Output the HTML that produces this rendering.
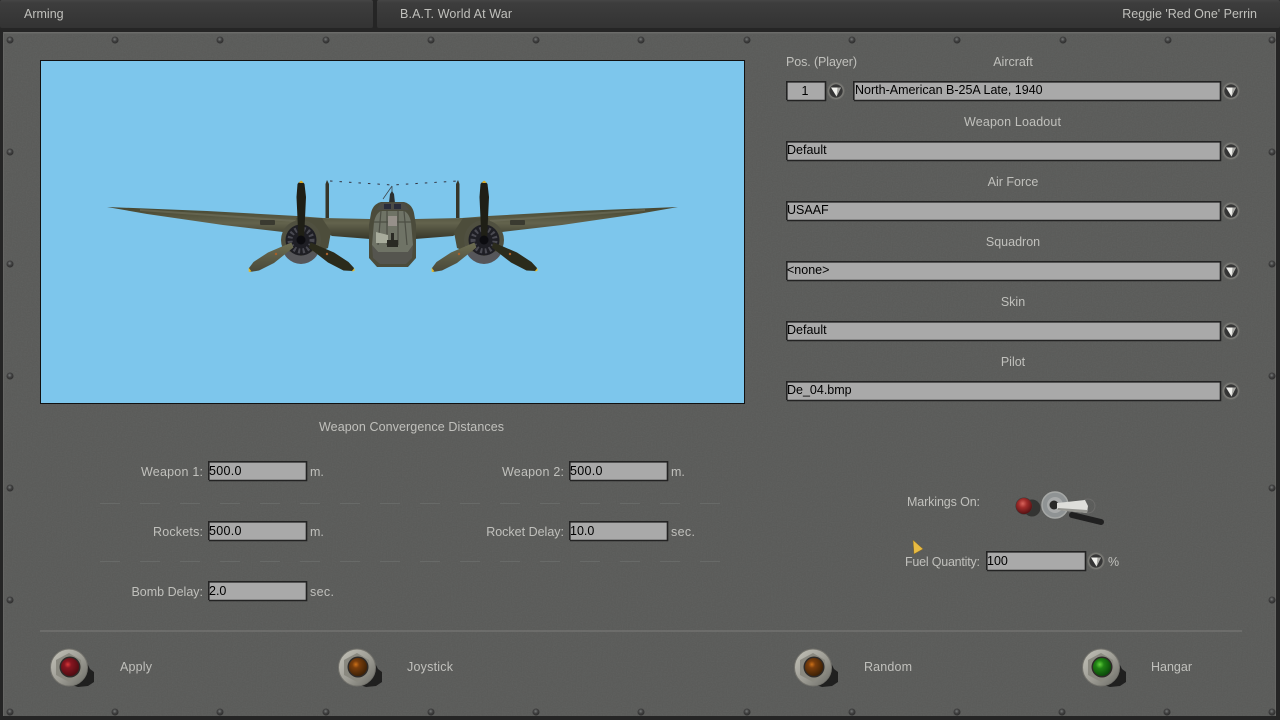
<!DOCTYPE html>
<html><head><meta charset="utf-8"><style>
html,body{margin:0;padding:0;background:#222;width:1280px;height:720px;overflow:hidden}
svg{display:block}
text{font-family:"Liberation Sans",sans-serif;font-size:12.5px;fill:#c0c0bc}
.f{fill:#000}
.m{text-anchor:middle}.e{text-anchor:end}
</style></head><body>
<svg width="1280" height="720" viewBox="0 0 1280 720" xmlns="http://www.w3.org/2000/svg">
<defs>
<filter id="noise" x="0" y="0" width="100%" height="100%"><feTurbulence type="fractalNoise" baseFrequency="0.8" numOctaves="2" seed="3"/><feColorMatrix values="0 0 0 0 0.25 0 0 0 0 0.25 0 0 0 0 0.25 0.6 0.6 0 0 -0.4"/></filter>
<linearGradient id="bar" x1="0" y1="0" x2="0" y2="1"><stop offset="0" stop-color="#454545"/><stop offset=".1" stop-color="#3d3d3d"/><stop offset="1" stop-color="#333"/></linearGradient>
<radialGradient id="riv" cx=".45" cy=".4" r=".6"><stop offset="0" stop-color="#777a7a"/><stop offset=".5" stop-color="#414141"/><stop offset="1" stop-color="#2c2c2c"/></radialGradient>
<g id="r"><circle r="3.5" fill="url(#riv)"/></g>
<radialGradient id="dd" cx=".5" cy=".5" r=".5"><stop offset="0" stop-color="#2c2c2c"/><stop offset=".72" stop-color="#383838"/><stop offset=".8" stop-color="#80807b"/><stop offset="1" stop-color="#666663"/></radialGradient>
<g id="d"><circle r="8.800" fill="url(#dd)"/><path d="M-5-3.500H5L.5 5.500Z" fill="#f0f0ec"/><path d="M1.500-3.500H5L.5 5.500Z" fill="#a8a8a4"/></g>
<linearGradient id="ring" x1="0" y1="0" x2="1" y2="1"><stop offset="0" stop-color="#c4c3ba"/><stop offset=".55" stop-color="#9c9b93"/><stop offset="1" stop-color="#6a6a64"/></linearGradient>
<g id="bt"><path d="M10-8 17-4 20 2 24 5 24 15 18 19 8 20 2 18Z" fill="#1c1c1c" opacity=".95"/><circle cx="-1" cy=".5" r="18.500" fill="url(#ring)"/><circle cx="-1" cy=".5" r="18.500" fill="none" stroke="#73726c"/><path d="M-1-14 11-7 12 7-1 15-14 8-14-7Z" fill="#8a8980"/><circle r="10.500" fill="#2e2a28"/></g>
<radialGradient id="lr" cx=".38" cy=".36" r=".65"><stop offset="0" stop-color="#d8383a"/><stop offset=".3" stop-color="#861620"/><stop offset="1" stop-color="#520c12"/></radialGradient>
<radialGradient id="lo" cx=".38" cy=".36" r=".65"><stop offset="0" stop-color="#cc7018"/><stop offset=".3" stop-color="#7a3e0c"/><stop offset="1" stop-color="#3f2206"/></radialGradient>
<radialGradient id="lg" cx=".38" cy=".36" r=".65"><stop offset="0" stop-color="#62d03c"/><stop offset=".35" stop-color="#1f8214"/><stop offset="1" stop-color="#0c4a0a"/></radialGradient>
<radialGradient id="lm" cx=".42" cy=".35" r=".65"><stop offset="0" stop-color="#d8645c"/><stop offset=".4" stop-color="#a02c2a"/><stop offset="1" stop-color="#561214"/></radialGradient>
<linearGradient id="wing" x1="0" y1="0" x2="0" y2="1"><stop offset="0" stop-color="#45452f"/><stop offset=".5" stop-color="#63634d"/><stop offset="1" stop-color="#37372a"/></linearGradient>
<linearGradient id="blade" x1="0" y1="0" x2="0" y2="1"><stop offset="0" stop-color="#6e6e52"/><stop offset="1" stop-color="#48483a"/></linearGradient>
<g id="half">
<path d="M107 207 207 211 297 216 323 218 370 219 370 239 332 236 320 229 283 232 223 225 147 214Z" fill="url(#wing)"/>
<path d="M140 209 295 220 295 222 140 211Z" fill="#6f6f5c" opacity=".6"/>
<rect x="260" y="220" width="15" height="5" rx="1" fill="#3a3a30"/>
<path d="M325.500 218V184L327 180 329 184V218Z" fill="#36362a"/>
<path d="M296 218 322 218 331 232 328 248 305 258Z" fill="#4d4d3b"/>
<circle cx="301" cy="240" r="20" fill="#505040"/>
<path d="M282 245A19 19 0 0 0 320 245L317 250 301 256 285 250Z" fill="#56565a"/>
<circle cx="301" cy="240" r="15.500" fill="#1e1e24"/>
<circle cx="301" cy="240" r="11" fill="none" stroke="#4a4a52" stroke-width="5" stroke-dasharray="2 2.500"/>
</g>
<g id="prop">
<path d="M291.400 242.500 268 252.500 253.500 262 249 268 250 272 259 270.500 274 263 293.400 247.500Z" fill="url(#blade)"/>
<path d="M248.500 267.500 251.500 271.500 248.800 272Z" fill="#e3bb2d"/>
<circle cx="276" cy="254" r="1.200" fill="#a8602a"/>
<path d="M310.700 242.500 334 252.500 348.500 262 354 268 353 271 343.500 270.500 328 262.500 308.700 247.500Z" fill="#2b2b1c"/>
<path d="M351.500 271.500 354.500 268 354.500 271Z" fill="#e3bb2d"/>
<circle cx="327" cy="254" r="1.200" fill="#a8602a"/>
<path d="M298.500 240 296.500 197 297.500 184 Q301 179 304.500 184 L306 197 304 240Z" fill="#1f1f16"/>
<path d="M299 183 Q301 178.500 303.500 183Z" fill="#d6a928"/>
<circle cx="301" cy="240" r="4.500" fill="#0c0c10"/>
</g>
</defs>
<rect width="1280" height="720" fill="#252525"/>
<rect x="0" y="0" width="373" height="28" rx="2" fill="url(#bar)"/>
<rect x="377" y="0" width="903" height="28" rx="2" fill="url(#bar)"/>
<rect x="3" y="32" width="1273" height="684" fill="#5a5b59"/>
<rect x="3" y="32" width="1273" height="684" filter="url(#noise)" opacity=".25"/>
<path d="M3 32.500H1276" stroke="#6c6c6a"/>
<path d="M3.500 32V716M1275.500 32V716" stroke="#666664"/>
<path d="M3 33.500H1276" stroke="#626361"/>

<use href="#r" x="10" y="40"/><use href="#r" x="115" y="40"/><use href="#r" x="220" y="40"/><use href="#r" x="326" y="40"/><use href="#r" x="431" y="40"/><use href="#r" x="536" y="40"/><use href="#r" x="641" y="40"/><use href="#r" x="747" y="40"/><use href="#r" x="852" y="40"/><use href="#r" x="957" y="40"/><use href="#r" x="1063" y="40"/><use href="#r" x="1168" y="40"/><use href="#r" x="1272" y="40"/>
<use href="#r" x="10" y="152"/><use href="#r" x="10" y="264"/><use href="#r" x="10" y="376"/><use href="#r" x="10" y="488"/><use href="#r" x="10" y="600"/><use href="#r" x="10" y="712"/>
<use href="#r" x="1272" y="152"/><use href="#r" x="1272" y="264"/><use href="#r" x="1272" y="376"/><use href="#r" x="1272" y="488"/><use href="#r" x="1272" y="600"/><use href="#r" x="1272" y="712"/>
<use href="#r" x="115" y="712"/><use href="#r" x="220" y="712"/><use href="#r" x="326" y="712"/><use href="#r" x="431" y="712"/><use href="#r" x="536" y="712"/><use href="#r" x="641" y="712"/><use href="#r" x="747" y="712"/><use href="#r" x="852" y="712"/><use href="#r" x="957" y="712"/><use href="#r" x="1062" y="712"/><use href="#r" x="1167" y="712"/>

<text x="24" y="18">Arming</text>
<text x="400" y="18" textLength="112">B.A.T. World At War</text>
<text x="1257" y="18" class="e">Reggie 'Red One' Perrin</text>

<rect x="40.500" y="60.500" width="704" height="343" fill="#7dc6ec" stroke="#111"/>

<path d="M330 181 392 185 458 181" fill="none" stroke="#333340" stroke-width="1" stroke-dasharray="2.500 7"/>
<path d="M392 186 383 199M392 186V196" stroke="#40484e" stroke-width=".8" fill="none"/>
<use href="#half"/>
<use href="#half" transform="translate(785 0) scale(-1 1)"/>
<use href="#prop"/>
<use href="#prop" x="183"/>
<path d="M389 203 390 194 392 191 394 194 395 203Z" fill="#2c3030"/>
<path d="M381 202H404Q412 204 414 213L416 225V258L408 267H377L369 258V225L371 213Q373 204 381 202Z" fill="#4b4b3b"/>
<path d="M374 222Q376 213 381 211H404Q409 213 411 222L413 245 408 252H378L372 245Z" fill="#6f7366"/>
<path d="M372 245 378 252H408L413 245 412 258 406 264H380L373 258Z" fill="#55554f"/>
<path d="M381 203H404L409 210H376Z" fill="#4c4c46"/>
<path d="M384 204h7v5h-7zM394 204h7v5h-7z" fill="#2a2c3a"/>
<path d="M381 211 378 245M404 211 407 245M387 211V245M398 211V245M374 222H411" stroke="#4c4e44" stroke-width="1.200" fill="none"/>
<path d="M388 216h9v10h-9z" fill="#96908a"/>
<path d="M376 232 388 235 388 243 376 243Z" fill="#a8ac9c"/>
<path d="M387 240h11v7h-11z M391 233h3v7h-3z" fill="#2a2a24"/>

<text x="411.500" y="431" class="m" textLength="185">Weapon Convergence Distances</text>

<g fill="#a9a9a9">
<rect x="208" y="461" width="99" height="20"/><rect x="569" y="461" width="99" height="20"/>
<rect x="208" y="521" width="99" height="20"/><rect x="569" y="521" width="99" height="20"/>
<rect x="208" y="581" width="99" height="20"/>
<rect x="986" y="551" width="100" height="20"/>
<rect x="786" y="81" width="40" height="20"/>
<rect x="853" y="81" width="368" height="20"/>
<rect x="786" y="141" width="435" height="20"/>
<rect x="786" y="201" width="435" height="20"/>
<rect x="786" y="261" width="435" height="20"/>
<rect x="786" y="321" width="435" height="20"/>
<rect x="786" y="381" width="435" height="20"/>
</g>
<g fill="none" stroke="#232323" stroke-width="1.600">
<path d="M208.800 480.500V461.800H306.500V480.500H208.800M569.800 480.500V461.800H667.500V480.500H569.800M208.800 540.500V521.800H306.500V540.500H208.800M569.800 540.500V521.800H667.500V540.500H569.800M208.800 600.500V581.800H306.500V600.500H208.800M986.800 570.500V551.800H1085.500V570.500H986.800"/>
<path d="M786.800 100.500V81.800H825.500V100.500H786.800M853.800 100.500V81.800H1220.500V100.500H853.800M786.800 160.500V141.800H1220.500V160.500H786.800M786.800 220.500V201.800H1220.500V220.500H786.800M786.800 280.500V261.800H1220.500V280.500H786.800M786.800 340.500V321.800H1220.500V340.500H786.800M786.800 400.500V381.800H1220.500V400.500H786.800"/>
</g>

<text x="203" y="476" class="e" textLength="62">Weapon 1:</text><text x="209" y="475" class="f" textLength="32.500">500.0</text><text x="310" y="476">m.</text>
<text x="564" y="476" class="e" textLength="62">Weapon 2:</text><text x="570" y="475" class="f" textLength="32.500">500.0</text><text x="671" y="476">m.</text>
<text x="203" y="536" class="e" textLength="50">Rockets:</text><text x="209" y="535" class="f" textLength="32.500">500.0</text><text x="310" y="536">m.</text>
<text x="564" y="536" class="e">Rocket Delay:</text><text x="570" y="535" class="f">10.0</text><text x="671" y="536" textLength="24">sec.</text>
<text x="203" y="596" class="e">Bomb Delay:</text><text x="209" y="595" class="f">2.0</text><text x="310" y="596" textLength="24">sec.</text>

<path d="M100 503.500H720M100 561.500H720" stroke="#686a68" stroke-dasharray="20 20"/>
<path d="M40 631H1242" stroke="#727270" stroke-width="1.500"/>

<text x="786" y="66" textLength="71">Pos. (Player)</text>
<text x="1013" y="66" class="m">Aircraft</text>
<text x="1012.500" y="126" class="m" textLength="97">Weapon Loadout</text>
<text x="1013" y="186" class="m">Air Force</text>
<text x="1013" y="246" class="m">Squadron</text>
<text x="1013" y="306" class="m">Skin</text>
<text x="1013" y="366" class="m">Pilot</text>
<text x="805" y="95" class="f m">1</text>
<text x="855" y="94" class="f">North-American B-25A Late, 1940</text>
<text x="787" y="154" class="f">Default</text>
<text x="787" y="214" class="f">USAAF</text>
<text x="787" y="274" class="f">&lt;none&gt;</text>
<text x="787" y="334" class="f">Default</text>
<text x="787" y="394" class="f">De_04.bmp</text>
<use href="#d" x="836" y="91"/><use href="#d" x="1231" y="91"/><use href="#d" x="1231" y="151"/><use href="#d" x="1231" y="211"/><use href="#d" x="1231" y="271"/><use href="#d" x="1231" y="331"/><use href="#d" x="1231" y="391"/><use href="#d" x="1096" y="561"/>

<text x="980" y="506" class="e" textLength="73">Markings On:</text>
<text x="980" y="566" class="e" textLength="75">Fuel Quantity:</text>
<text x="987" y="565" class="f">100</text>
<text x="1108" y="566">%</text>

<circle cx="1032" cy="508" r="8.500" fill="#343432"/>
<circle cx="1024" cy="506" r="8.500" fill="#3a3a38"/>
<circle cx="1024" cy="506" r="8" fill="url(#lm)"/>
<path d="M1072 515 1101 522" stroke="#202020" stroke-width="6" stroke-linecap="round"/>
<circle cx="1055" cy="505" r="13" fill="#8f9394"/>
<circle cx="1055" cy="505" r="13" fill="none" stroke="#a6a8a6" stroke-width="1.500"/>
<circle cx="1055" cy="505" r="8" fill="#a8aaaa"/>
<circle cx="1054" cy="505" r="4.500" fill="#2a2a28"/>
<circle cx="1088" cy="506" r="7" fill="none" stroke="#6c6c6a"/>
<path d="M1057 503 1085 500 1088 506 1087 513 1057 510Z" fill="#dededa"/>
<path d="M1058 508 1087 510 1087 513 1057 510Z" fill="#94948f"/>

<use href="#bt" x="70" y="667"/><circle cx="70" cy="667" r="9" fill="url(#lr)"/>
<use href="#bt" x="358" y="667"/><circle cx="358" cy="667" r="9" fill="url(#lo)"/>
<use href="#bt" x="814" y="667"/><circle cx="814" cy="667" r="9" fill="url(#lo)"/>
<use href="#bt" x="1102" y="667"/><circle cx="1102" cy="667" r="9" fill="url(#lg)"/>
<text x="120" y="671" textLength="32">Apply</text>
<text x="407" y="671" textLength="46">Joystick</text>
<text x="864" y="671" textLength="48">Random</text>
<text x="1151" y="671">Hangar</text>

<path d="M913 540 923 549 914 554Z" fill="#e8bb42" stroke="#8a6a20" stroke-width=".5"/>
</svg>
</body></html>
